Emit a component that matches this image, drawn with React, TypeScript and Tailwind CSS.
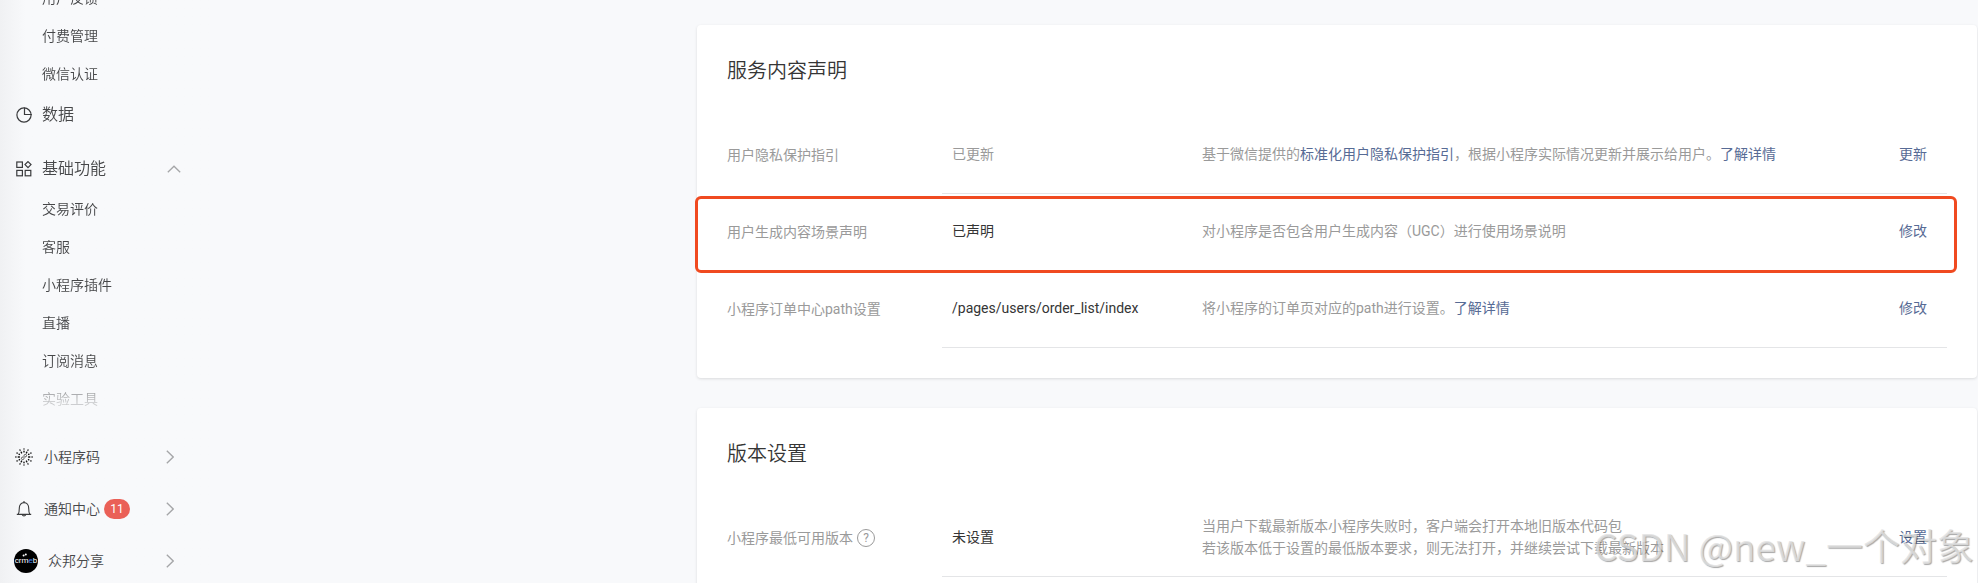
import React from 'react';

type Row = {
  label: string;
  help?: boolean;
  status: string;
  muted?: boolean;
  desc: React.ReactNode;
  action: string;
  highlight?: boolean;
};

const Link: React.FC<{ children: React.ReactNode }> = ({ children }) => (
  <a href="#" className="text-[#576b95]">
    {children}
  </a>
);

const contentRows: Row[] = [
  {
    label: '用户隐私保护指引',
    status: '已更新',
    muted: true,
    desc: (
      <>
        基于微信提供的<Link>标准化用户隐私保护指引</Link>，根据小程序实际情况更新并展示给用户。<Link>了解详情</Link>
      </>
    ),
    action: '更新',
  },
  {
    label: '用户生成内容场景声明',
    status: '已声明',
    desc: '对小程序是否包含用户生成内容（UGC）进行使用场景说明',
    action: '修改',
    highlight: true,
  },
  {
    label: '小程序订单中心path设置',
    status: '/pages/users/order_list/index',
    desc: (
      <>
        将小程序的订单页对应的path进行设置。<Link>了解详情</Link>
      </>
    ),
    action: '修改',
  },
];

const versionRows: Row[] = [
  {
    label: '小程序最低可用版本',
    help: true,
    status: '未设置',
    desc: (
      <>
        当用户下载最新版本小程序失败时，客户端会打开本地旧版本代码包
        <br />
        若该版本低于设置的最低版本要求，则无法打开，并继续尝试下载最新版本
      </>
    ),
    action: '设置',
  },
];

const DataIcon = () => (
  <svg className="size-4" viewBox="0 0 16 16" fill="none" stroke="#3a3b3d" strokeWidth="1.2">
    <circle cx="8" cy="8" r="7.1" />
    <path d="M8.5 0.4V7.5H15.8" />
  </svg>
);

const GridIcon = () => (
  <svg className="size-4" viewBox="0 0 16 16" fill="none" stroke="#3a3b3d" strokeWidth="1.2">
    <rect x="0.8" y="1" width="5.6" height="5.4" />
    <rect x="0.8" y="9.4" width="5.6" height="5.4" />
    <rect x="9.2" y="9.4" width="5.6" height="5.4" />
    <path d="M12 0.6L15 3.6L12 6.6L9 3.6Z" />
  </svg>
);

const CodeIcon = () => (
  <svg className="size-[18px]" viewBox="0 0 18 18" fill="none" stroke="#111" strokeLinecap="round">
    <path
      strokeWidth="1.4"
      d="M0.8 9H1M3.2 9H4.4M13.6 9H14.8M17 9H17.2M5 2L5.1 2.2M6.2 4.2L6.6 4.9M13 2L12.9 2.2M11.8 4.2L11.4 4.9M2 5L2.2 5.1M4 6.2L4.4 6.4M16 5L15.8 5.1M14 6.2L13.6 6.4M2 13L2.2 12.9M4.2 11.8L4.5 11.6M16 13L15.8 12.9M13.8 11.8L13.5 11.6M5 16L5.1 15.8M6.2 13.8L6.6 13.1M13 16L12.9 15.8M11.8 13.8L11.4 13.1M9 0.9V1M9 3.2V3.9M9 17V17.1M9 14.1V14.8"
    />
    <path
      stroke="#555"
      strokeWidth="1"
      d="M7.6 9A1.3 1.3 0 1 0 9 10.4V7.7A1.3 1.3 0 1 1 10.4 9"
    />
  </svg>
);

const BellIcon = () => (
  <svg className="size-[18px]" viewBox="0 0 18 18" fill="none" stroke="#3a3b3d" strokeWidth="1.1">
    <path d="M1.8 14.4H16.2M3.2 14.2C4.2 12.8 4.3 11.4 4.3 8C4.3 4.8 6.3 2.6 9 2.6S13.7 4.8 13.7 8C13.7 11.4 13.8 12.8 14.8 14.2" />
    <path d="M9 2.6V0.9M7.2 14.6A1.9 1.9 0 0 0 10.8 14.6" />
  </svg>
);

const Avatar = () => (
  <span className="flex size-6 items-center justify-center overflow-hidden rounded-full bg-black text-[8px] font-normal leading-none text-white">
    cr
    <span className="relative">
      m
      <svg className="absolute -top-1 left-0 h-1 w-1.5" viewBox="0 0 6 4" fill="#fff">
        <circle cx="1.6" cy="2.4" r="1" />
        <circle cx="3.8" cy="1.4" r="1" />
      </svg>
    </span>
    <span className="text-[#3b82f6]">e</span>b
  </span>
);

const ChevronRight = () => (
  <svg className="h-3.5 w-2" viewBox="0 0 8 14" fill="none" stroke="#a5a6a8" strokeWidth="1.3">
    <path d="M0.8 0.8L7.2 7L0.8 13.2" />
  </svg>
);

const SubItem: React.FC<{ text: string }> = ({ text }) => (
  <a href="#" className="flex h-[38px] items-center pl-[42px] text-sm">
    {text}
  </a>
);

const FooterItem: React.FC<{ icon: React.ReactNode; text: string; badge?: string; wide?: boolean }> = ({
  icon,
  text,
  badge,
  wide,
}) => (
  <a href="#" className={`flex h-[52px] items-center pr-[39px] text-sm ${wide ? 'gap-2.5 pl-3.5' : 'gap-[11px] pl-[15px]'}`}>
    {icon}
    <span className="flex flex-1 items-center gap-1">
      {text}
      {badge && (
        <span className="flex h-5 w-[26px] items-center justify-center rounded-full bg-[#ea6057] text-xs font-normal text-white">
          {badge}
        </span>
      )}
    </span>
    <ChevronRight />
  </a>
);

const Sidebar = () => (
  <aside className="w-[213px] shrink-0 bg-linear-to-r from-[#f0f1f3] to-[#f8f9fb] to-12% text-[#464749]">
    <nav className="h-[431px] overflow-hidden mask-b-from-84% mask-b-to-97%">
      <div className="-mt-[21px]">
        {['用户反馈', '付费管理', '微信认证'].map((t) => (
          <SubItem key={t} text={t} />
        ))}
      </div>
      <a href="#" className="flex h-11 items-center gap-2.5 pl-4 text-base">
        <DataIcon />
        数据
      </a>
      <button type="button" className="mt-2.5 flex h-[43px] w-full items-center gap-2.5 pl-4 pr-8 text-left text-base">
        <GridIcon />
        <span className="flex-1">基础功能</span>
        <svg className="h-2 w-3.5" viewBox="0 0 14 8" fill="none" stroke="#a5a6a8" strokeWidth="1.3">
          <path d="M0.8 7.2L7 1.2L13.2 7.2" />
        </svg>
      </button>
      {['交易评价', '客服', '小程序插件', '直播', '订阅消息', '实验工具'].map((t) => (
        <SubItem key={t} text={t} />
      ))}
    </nav>
    <FooterItem icon={<CodeIcon />} text="小程序码" />
    <FooterItem icon={<BellIcon />} text="通知中心" badge="11" />
    <FooterItem icon={<Avatar />} text="众邦分享" wide />
  </aside>
);

const SettingRow: React.FC<{ row: Row }> = ({ row }) => (
  <div className="relative flex h-[77px] text-sm leading-[22px] font-normal text-[#9a9a9a]">
    <div className="flex w-[215px] items-center gap-1 pb-px">
      {row.label}
      {row.help && (
        <button
          type="button"
          aria-label="帮助"
          className="flex size-[18px] items-center justify-center rounded-full border border-[#9a9a9a] text-xs leading-none"
        >
          ?
        </button>
      )}
    </div>
    <div className="flex flex-1 items-center border-b border-[#e4e5e7] pl-2.5 pr-5 pb-0.5">
      <div className={`w-[250px] ${row.muted ? '' : 'text-[#353535]'}`}>{row.status}</div>
      <div className="flex-1">{row.desc}</div>
      <button type="button" className="text-[#576b95]">
        {row.action}
      </button>
    </div>
    {row.highlight && (
      <div className="pointer-events-none absolute -left-8 -right-2.5 top-0.5 -bottom-0.5 rounded-md border-3 border-[#f04a20]" />
    )}
  </div>
);

const Card: React.FC<{ title: string; rows: Row[] }> = ({ title, rows }) => (
  <section className="rounded bg-white px-[30px] pb-[30px] pt-8 shadow-[0_1px_3px_rgba(0,0,0,0.12)]">
    <h2 className="mb-8 text-xl leading-7 font-[350] text-[#353535]">{title}</h2>
    {rows.map((row) => (
      <SettingRow key={row.label} row={row} />
    ))}
  </section>
);

const App: React.FC = () => {
  return (
    <div className="relative flex h-screen overflow-hidden bg-[#f8f9fb] font-[Roboto,'Noto_Sans_CJK_SC',sans-serif] font-[350]">
      <Sidebar />
      <main className="flex flex-1 flex-col gap-[30px] pl-[484px] pr-px pt-[25px]">
        <Card title="服务内容声明" rows={contentRows} />
        <Card title="版本设置" rows={versionRows} />
      </main>
      <div className="pointer-events-none absolute bottom-2.5 right-1 font-['Noto_Sans_CJK_SC',sans-serif] text-[37px] leading-[56px] text-[#e2e2e2]/80 [text-shadow:1px_1px_1px_rgba(0,0,0,0.35)]">
        CSDN @new_一个对象
      </div>
    </div>
  );
};

export default App;
